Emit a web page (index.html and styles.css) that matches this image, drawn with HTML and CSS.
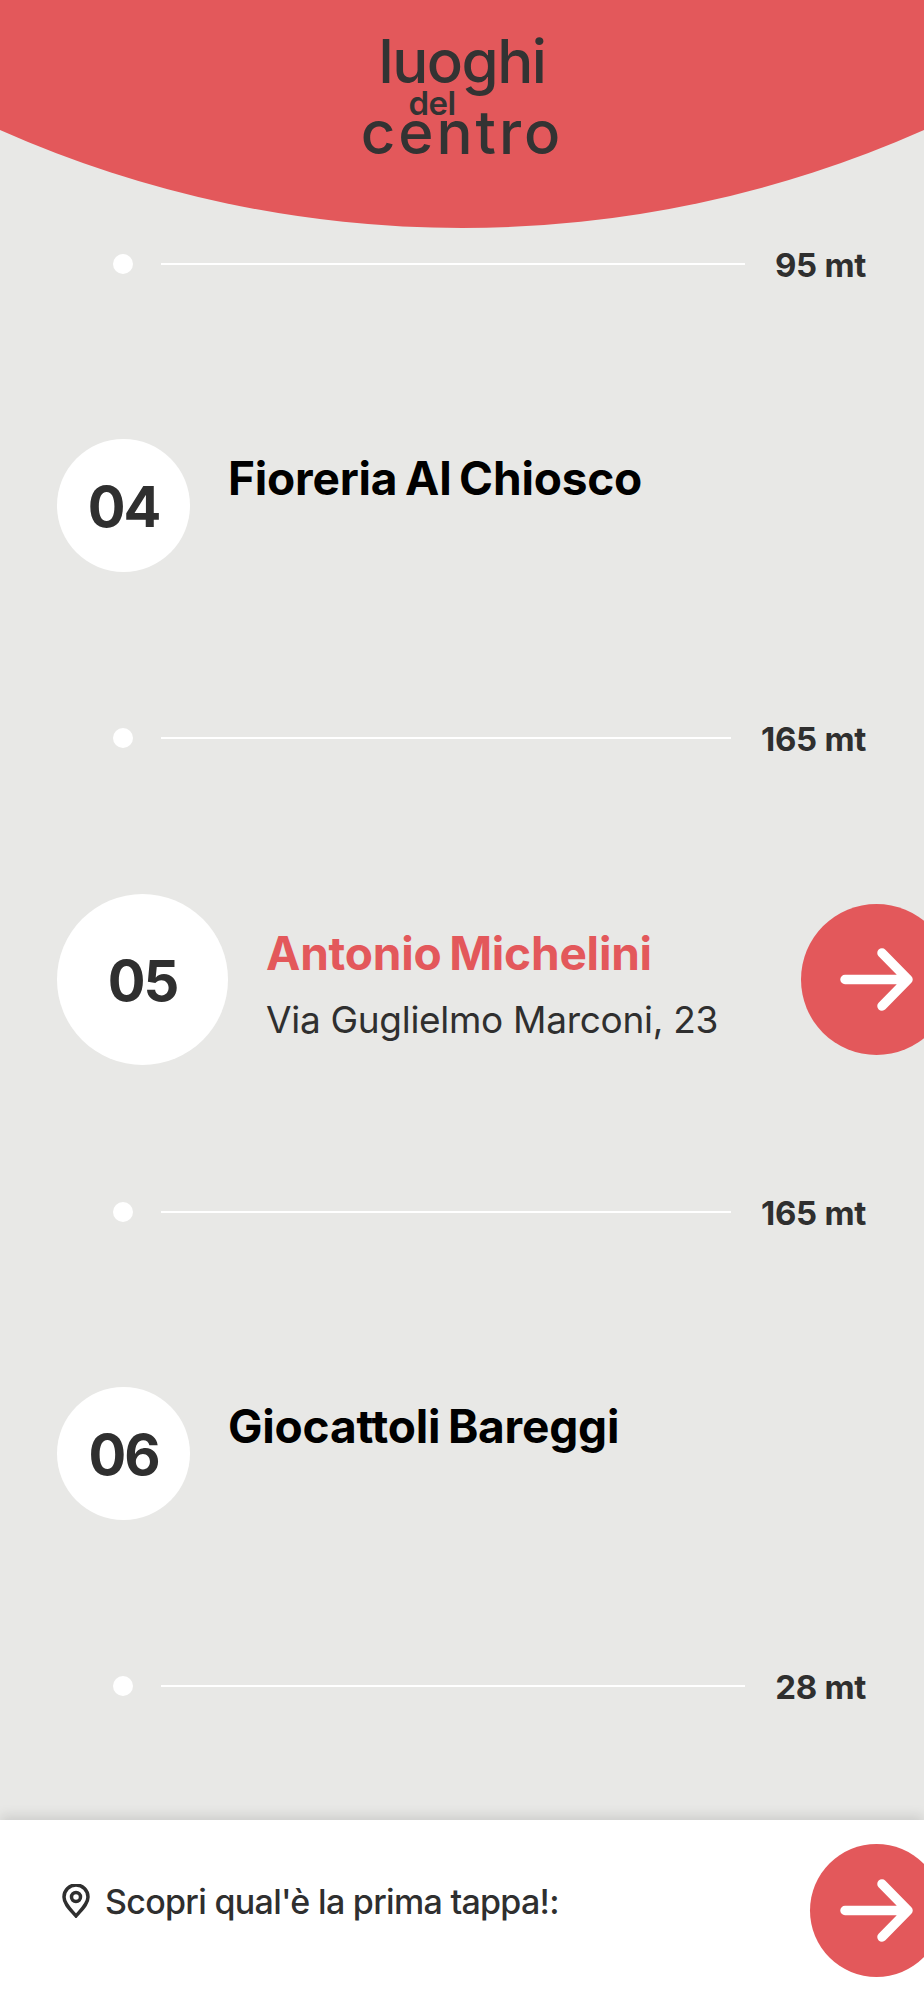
FILE: index.html
```html
<!DOCTYPE html>
<html lang="it">
<head>
  <meta charset="UTF-8" />
  <meta name="viewport" content="width=device-width, initial-scale=1.0"/>
  <title>Luoghi del Centro</title>
  <link rel="stylesheet" href="styles.css">
</head>
<body>

<header class="top">
  <svg class="top-shape" viewBox="0 0 924 228" width="924" height="228" aria-hidden="true">
    <path d="M0 0H924V130A1138 1138 0 0 1 0 130Z" fill="#e3585b"/>
  </svg>
  <div class="logo">
    <span class="logo-big">luoghi</span>
    <span class="logo-small">del</span>
    <span class="logo-big logo-last">centro</span>
  </div>
</header>

<main class="route">
  <div class="leg">
    <span class="leg-dot"></span>
    <span class="leg-line"></span>
    <span class="leg-dist">95 mt</span>
  </div>

  <div class="stop">
    <div class="stop-num">04</div>
    <h2 class="stop-name">Fioreria Al Chiosco</h2>
  </div>

  <div class="leg">
    <span class="leg-dot"></span>
    <span class="leg-line"></span>
    <span class="leg-dist">165 mt</span>
  </div>

  <div class="stop stop-active">
    <div class="stop-num">05</div>
    <div class="stop-text">
      <h2 class="stop-name">Antonio Michelini</h2>
      <p class="stop-addr">Via Guglielmo Marconi, 23</p>
    </div>
    <button class="go go-big" type="button" aria-label="Vai">
      <svg viewBox="0 0 73 63" width="73" height="63"><path d="M5 31.500H68M42 5L68 31.500L42 58"/></svg>
    </button>
  </div>

  <div class="leg">
    <span class="leg-dot"></span>
    <span class="leg-line"></span>
    <span class="leg-dist">165 mt</span>
  </div>

  <div class="stop">
    <div class="stop-num">06</div>
    <h2 class="stop-name">Giocattoli Bareggi</h2>
  </div>

  <div class="leg">
    <span class="leg-dot"></span>
    <span class="leg-line"></span>
    <span class="leg-dist">28 mt</span>
  </div>
</main>

<footer class="bottom">
  <div class="bottom-label">
    <svg class="pin" viewBox="0 0 28 34" width="28" height="34" aria-hidden="true">
      <path d="M14 32C9 26 2 20 2 13A12 12 0 0 1 26 13C26 20 19 26 14 32Z"/>
      <circle cx="14" cy="13" r="4.500"/>
    </svg>
    <span class="bottom-text">Scopri qual'è la prima tappa!:</span>
  </div>
  <button class="go go-small" type="button" aria-label="Vai">
    <svg viewBox="0 0 73 63" width="73" height="63"><path d="M5 31.500H68M42 5L68 31.500L42 58"/></svg>
  </button>
</footer>

</body>
</html>
```

FILE: styles.css
```css
* {
  box-sizing: border-box;
  font-family: 'Inter', 'Liberation Sans', sans-serif;
}

body {
  margin: 0;
  height: 2000px;
  background: #e8e8e6;
  color: #2f2f2f;
  display: flex;
  flex-direction: column;
  overflow: hidden;
}

.top {
  position: relative;
  height: 228px;
  flex: none;
}

.top-shape {
  position: absolute;
  top: 0;
  left: 0;
  display: block;
}

.logo {
  position: relative;
  display: flex;
  flex-direction: column;
  align-items: center;
  padding-top: 38px;
  color: #333;
}

.logo span {
  display: block;
}

.logo-big {
  font-size: 60px;
  line-height: 46px;
  height: 46px;
  font-weight: 500;
  letter-spacing: -1.5px;
}

.logo-small {
  font-size: 33px;
  line-height: 26px;
  height: 31px;
  padding-top: 6px;
  font-weight: 600;
  letter-spacing: -0.5px;
  margin-left: -60px;
}

.logo-last {
  letter-spacing: 3px;
  line-height: 34px;
  height: 38px;
}

.route {
  flex: 1;
  padding-top: 16px;
}

.leg {
  display: flex;
  align-items: center;
  height: 40px;
  padding: 0 58px 0 113px;
}

.leg-dot {
  width: 20px;
  height: 20px;
  border-radius: 50%;
  background: #fff;
  flex: none;
}

.leg-line {
  flex: 1;
  height: 2px;
  margin: 0 30px 0 28px;
  background: #fff;
}

.leg-dist {
  font-size: 33px;
  font-weight: 700;
  letter-spacing: -0.3px;
  line-height: 40px;
  padding-top: 2px;
}

.stop {
  display: flex;
  align-items: flex-start;
  gap: 38px;
  padding: 155px 0 146px 57px;
}

.stop-num {
  width: 133px;
  height: 133px;
  flex: none;
  border-radius: 50%;
  background: #fff;
  display: flex;
  align-items: center;
  justify-content: center;
  padding-top: 2px;
  font-size: 56px;
  font-weight: 700;
  letter-spacing: -2px;
}

.stop-name {
  margin: 0;
  padding-top: 11px;
  font-size: 46px;
  line-height: 56px;
  font-weight: 700;
  letter-spacing: -0.2px;
  word-spacing: -3px;
  color: #000;
}

.stop-active {
  align-items: center;
  padding: 136px 0 127px 57px;
}

.stop-active .stop-num {
  width: 171px;
  height: 171px;
}

.stop-text {
  padding-top: 10px;
}

.stop-active .stop-name {
  padding: 0;
  color: #e3585b;
}

.stop-addr {
  margin: 14px 0 0;
  font-size: 37px;
  line-height: 50px;
  letter-spacing: -0.3px;
}

.go {
  flex: none;
  margin-left: auto;
  padding: 0;
  border: 0;
  border-radius: 50%;
  background: #e3585b;
  display: flex;
  align-items: center;
  justify-content: center;
}

.go path {
  fill: none;
  stroke: #fff;
  stroke-width: 9.500;
  stroke-linecap: round;
  stroke-linejoin: round;
}

.go-big {
  width: 151px;
  height: 151px;
  margin-right: -28px;
}

.go-small {
  width: 133px;
  height: 133px;
  margin-right: -19px;
}

.bottom {
  height: 180px;
  flex: none;
  background: #fff;
  box-shadow: 0 -4px 12px rgba(0, 0, 0, 0.12);
  position: relative;
  display: flex;
  align-items: center;
  padding-left: 62px;
}

.bottom-label {
  display: flex;
  align-items: center;
  margin-bottom: 18px;
}

.pin {
  flex: none;
  margin-right: 15px;
}

.pin path, .pin circle {
  fill: none;
  stroke: #2f2f2f;
  stroke-width: 3.500;
}

.bottom-text {
  font-size: 34px;
  font-weight: 500;
  letter-spacing: -0.7px;
}
```
